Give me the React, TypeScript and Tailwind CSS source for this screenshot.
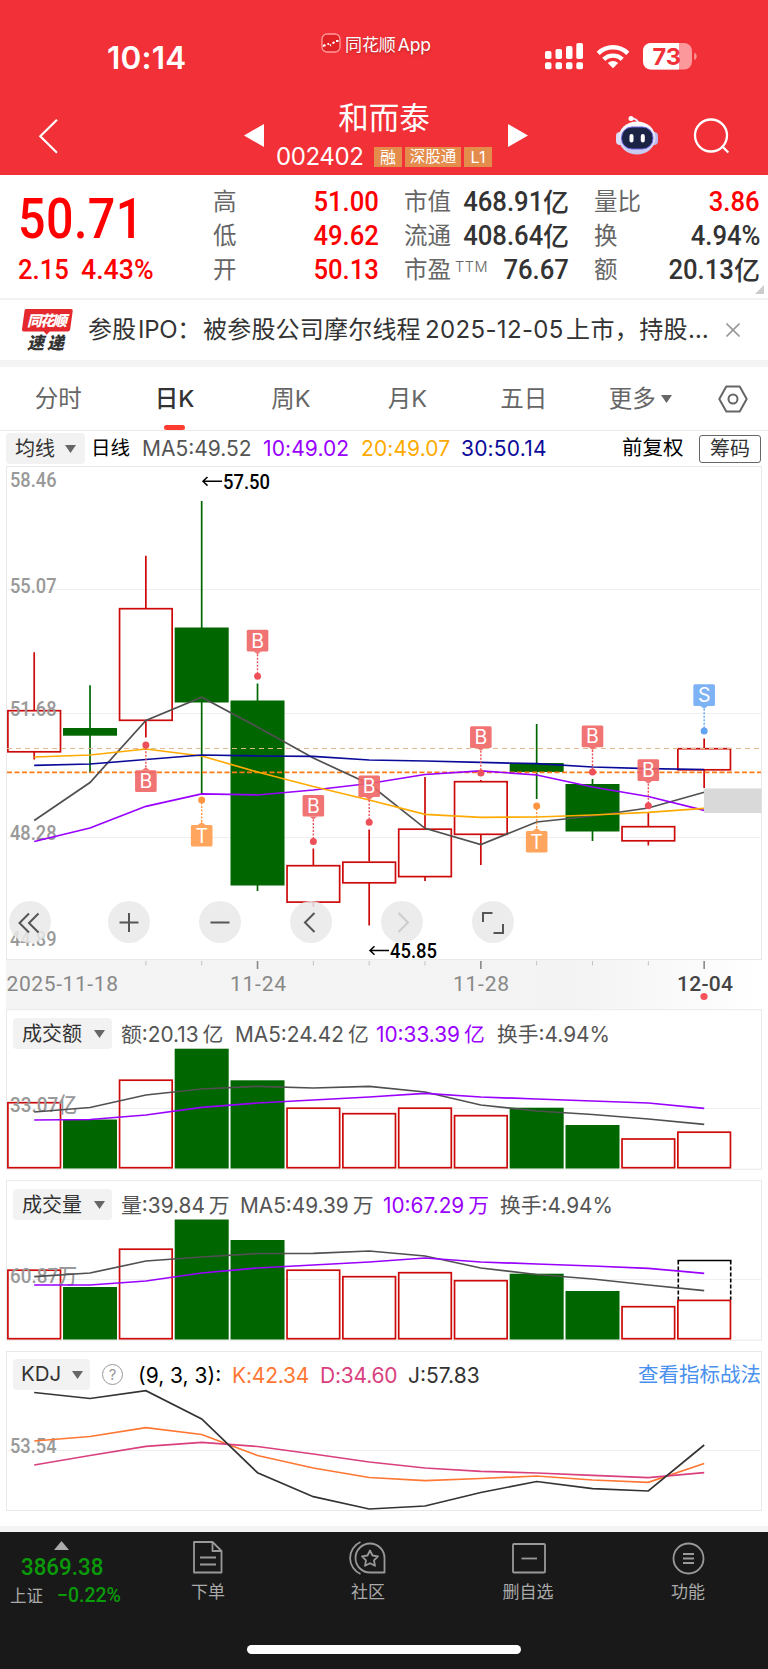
import React from "react";

type Candle = {
    up: boolean;
    high: number;
    top: number;
    bottom: number;
    low: number;
};

type Marker = {
    index: number;
    label: "B" | "T" | "S";
    badge: number;
    dot: number;
};

type QuoteRow = {
    label: string;
    value: string;
    sup?: string;
    unit?: string;
    red?: boolean;
};

type BarPanelProps = {
    offset: number;
    name: string;
    axis: string;
    tops: number[];
    ma5: number[];
    ma10: number[];
    projected?: number;
    legend: React.ReactNode;
};

const STEP = 55.83;
const xAt = (i: number) => 34.2 + STEP * i;

const toPoints = (values: number[]) =>
    values.map((y, i) => `${xAt(i).toFixed(1)},${y}`).join(" ");

const RED = "#cc0a0a";
const GREEN = "#006600";
const DIN = "Roboto, 'Noto Sans CJK SC', sans-serif";

const candles: Candle[] = [
    { up: true, high: 652.3, top: 710, bottom: 751.5, low: 759.5 },
    { up: false, high: 685.3, top: 728, bottom: 735.7, low: 773 },
    { up: true, high: 555.7, top: 608, bottom: 720, low: 737.5 },
    { up: false, high: 501, top: 627.5, bottom: 702.5, low: 793.5 },
    { up: false, high: 683.5, top: 700.5, bottom: 885.5, low: 891 },
    { up: true, high: 848.5, top: 865, bottom: 901.8, low: 907 },
    { up: true, high: 829.5, top: 861.5, bottom: 882.5, low: 925.5 },
    { up: true, high: 777, top: 828.5, bottom: 876.3, low: 881 },
    { up: true, high: 780, top: 781, bottom: 834, low: 865 },
    { up: false, high: 724, top: 763, bottom: 772, low: 799 },
    { up: false, high: 779, top: 784, bottom: 831.5, low: 841 },
    { up: true, high: 813, top: 826, bottom: 840.5, low: 845.5 },
    { up: true, high: 738.5, top: 748, bottom: 769.5, low: 788 },
];

const isUp = candles.map((c) => c.up);

const averages = [
    {
        color: "#505050",
        values: [820.5, 782.5, 720.5, 697.2, 727, 758, 784, 828.3, 844.5, 822, 816, 808, 792.2],
    },
    {
        color: "#9900ff",
        values: [841.5, 828, 806.3, 793.8, 795, 790, 783.5, 774.5, 770.8, 775, 787, 796.5, 810.3],
    },
    {
        color: "#ffaa00",
        values: [757, 755, 749, 756, 772, 786.5, 800, 814.3, 817.3, 817, 815, 812.3, 808.3],
    },
    {
        color: "#0a0a99",
        values: [765.3, 764, 759.5, 755, 756, 756.3, 760, 761, 762.3, 763.7, 767, 768.7, 769.5],
    },
];

const markers: Marker[] = [
    { index: 2, label: "B", badge: 770.3, dot: 745 },
    { index: 3, label: "T", badge: 825, dot: 800 },
    { index: 4, label: "B", badge: 629.8, dot: 676.3 },
    { index: 5, label: "B", badge: 795, dot: 841.5 },
    { index: 6, label: "B", badge: 775.5, dot: 822.3 },
    { index: 8, label: "B", badge: 726.3, dot: 773 },
    { index: 9, label: "T", badge: 831, dot: 806 },
    { index: 10, label: "B", badge: 725.6, dot: 772 },
    { index: 11, label: "B", badge: 759.3, dot: 805.7 },
    { index: 12, label: "S", badge: 684.3, dot: 731 },
];

const markerColors = {
    B: { fill: "#f06565", dot: "#ec5058" },
    T: { fill: "#ff9c4d", dot: "#ff9540" },
    S: { fill: "#6fabf3", dot: "#62a4f2" },
};

const quoteColumns: { className: string; rows: QuoteRow[] }[] = [
    {
        className: "ml-[213px] w-[166px]",
        rows: [
            { label: "高", value: "51.00", red: true },
            { label: "低", value: "49.62", red: true },
            { label: "开", value: "50.13", red: true },
        ],
    },
    {
        className: "ml-[25px] w-[165px]",
        rows: [
            { label: "市值", value: "468.91", unit: "亿" },
            { label: "流通", value: "408.64", unit: "亿" },
            { label: "市盈", sup: "TTM", value: "76.67" },
        ],
    },
    {
        className: "ml-[25px] w-[166px]",
        rows: [
            { label: "量比", value: "3.86", red: true },
            { label: "换", value: "4.94%" },
            { label: "额", value: "20.13", unit: "亿" },
        ],
    },
];

const Caret: React.FC<{ className?: string }> = ({ className = "" }) => (
    <svg viewBox="0 0 11 8" className={`h-2 w-[11px] shrink-0 ${className}`}>
        <path d="M0 0h11L5.5 8z" fill="#666" />
    </svg>
);

const StatusBar: React.FC = () => (
    <div className="flex h-[88px]">
        <div className="w-[321px] pt-[38px] pl-[107px] text-[31.5px] leading-10 font-semibold tracking-[0.2px]">
            10:14
        </div>
        <div className="flex h-[53px] w-[224px] items-end gap-1">
            <svg viewBox="0 0 20 20" className="h-5 w-5">
                <rect x="1" y="1" width="18" height="18" rx="5" fill="#e02226" stroke="#ff9a9a" strokeWidth="1.3" />
                <path d="M2 13l2.5-1M6.500 11.500l1.500-1M9 12.500l1-.5M11.500 10.500l2-1.500M15 8h2.500" fill="none" stroke="#fff" strokeWidth="2" />
            </svg>
            <span className="mb-[-4px] text-[17px] leading-6 tracking-[-0.1px] text-shadow-md">
                同花顺<span className="ml-[2px] text-[17.5px]">App</span>
            </span>
        </div>
        <svg viewBox="545 40 153 33" className="mt-10 h-[33px] w-[153px]">
            <g fill="#fff">
                <rect x="545" y="51" width="6.5" height="8" rx="1.8" />
                <rect x="555.5" y="49" width="6.5" height="10" rx="1.8" />
                <rect x="566" y="46" width="6.5" height="13" rx="1.8" />
                <rect x="576.3" y="43" width="6.7" height="16" rx="1.8" />
                <rect x="545" y="62.3" width="6.5" height="7" rx="1.8" />
                <rect x="555.5" y="62.3" width="6.5" height="7" rx="1.8" />
                <rect x="566" y="62.3" width="6.5" height="7" rx="1.8" />
                <rect x="576.3" y="62.3" width="6.7" height="7" rx="1.8" />
                <path d="M613 68.3l-5.2-5.2a7.4 7.4 0 0 1 10.4 0z" />
            </g>
            <g fill="none" stroke="#fff" strokeWidth="4.4">
                <path d="M598.2 53.4a21 21 0 0 1 29.6 0" />
                <path d="M603.8 59.4a13 13 0 0 1 18.4 0" />
            </g>
            <rect x="643" y="43" width="49" height="26.6" rx="8" fill="#fb989b" />
            <path d="M679 43h-28a8 8 0 0 0-8 8v10.6a8 8 0 0 0 8 8h28z" fill="#fff" />
            <path d="M694.3 52.5q2.4 1 2.4 3.8t-2.4 3.8z" fill="#fb989b" />
            <text x="652.5" y="65" fontSize="23.5" fontWeight="700" fill="#f23037" textLength="28.5">
                73
            </text>
        </svg>
    </div>
);

const NavBar: React.FC = () => (
    <div className="flex h-[87px] items-start">
        <svg viewBox="36 116 26 40" className="mt-7 ml-9 h-10 w-[26px]">
            <path d="M57 119.8L40.3 136.3l16.700 16.5" fill="none" stroke="#fff" strokeWidth="2.2" />
        </svg>
        <svg viewBox="0 0 20 23" className="mt-9 ml-[182px] h-[23px] w-5">
            <path d="M20 0v23L0 11.5z" fill="#fff" />
        </svg>
        <div className="ml-3 flex w-[216px] flex-col items-center">
            <h1 className="mt-[10px] h-10 text-[30.5px] leading-10 font-normal">和而泰</h1>
            <div className="mt-[9px] flex h-5 items-center gap-[3px] text-center text-[16px] leading-5">
                <span className="w-[95px] text-left text-[24px] tracking-[-0.4px]">002402</span>
                <span className="w-7 bg-[#e48c4b]">融</span>
                <span className="w-14 bg-[#e48c4b] text-[15.5px]">深股通</span>
                <span className="w-7 bg-[#e48c4b]">L1</span>
            </div>
        </div>
        <svg viewBox="0 0 20 23" className="mt-9 ml-4 h-[23px] w-5">
            <path d="M0 0v23l20-11.5z" fill="#fff" />
        </svg>
        <svg viewBox="614 114 46 44" className="mt-[26px] ml-[86px] h-11 w-[46px]">
            <defs>
                <linearGradient id="shell" x1="0" y1="0" x2="0" y2="1">
                    <stop offset="0" stopColor="#ffffff" />
                    <stop offset="1" stopColor="#c4c6f0" />
                </linearGradient>
            </defs>
            <path d="M631 118.5q6 0 7 4" fill="none" stroke="#e8e4ff" strokeWidth="2" />
            <circle cx="631" cy="118.5" r="2.5" fill="#fff" />
            <rect x="616" y="132" width="8" height="13" rx="4" fill="#dcdcfa" />
            <rect x="650" y="132" width="8" height="13" rx="4" fill="#b9baf0" />
            <ellipse cx="637" cy="138" rx="18.5" ry="16.5" fill="url(#shell)" />
            <rect x="621.5" y="127" width="31.5" height="22" rx="10.5" fill="#1b2444" stroke="#7468e8" />
            <rect x="629.5" y="134" width="4" height="8.5" rx="2" fill="#fff" />
            <rect x="640.8" y="134" width="4" height="8.5" rx="2" fill="#fff" />
        </svg>
        <svg viewBox="690 114 44 44" className="mt-[26px] ml-[30px] h-11 w-11">
            <g fill="none" stroke="#fff" strokeWidth="2.3">
                <circle cx="711" cy="135.5" r="16" />
                <path d="M721.8 146l6.5 6.5" />
            </g>
        </svg>
    </div>
);

const QuotePanel: React.FC = () => (
    <div className="relative flex h-[125px] border-b-2 border-[#f2f2f2]">
        <div className="absolute top-0 left-[18px] font-[Roboto] font-medium whitespace-nowrap text-[#ff0000]">
            <div className="mt-[14px] origin-left scale-x-[0.88] text-[55px] leading-[60px] tracking-[0.5px]">
                50.71
            </div>
            <div className="mt-[3px] flex text-[27.5px] leading-9">
                <span className="w-[63px] origin-left scale-x-[0.93]">2.15</span>
                <span className="origin-left scale-x-[0.97]">4.43%</span>
            </div>
        </div>
        {quoteColumns.map((column) => (
            <div key={column.className} className={`mt-[10px] flex flex-col ${column.className}`}>
                {column.rows.map((row) => (
                    <div key={row.label} className="flex h-[34px] items-center text-[23.5px]">
                        <span className="text-[#666]">{row.label}</span>
                        {row.sup && (
                            <span className="mb-[6px] ml-1 text-[14.5px] font-light tracking-[0.5px] text-[#666]">
                                {row.sup}
                            </span>
                        )}
                        <span
                            className={`ml-auto origin-right scale-x-[0.95] font-[Roboto] text-[27px] font-medium ${
                                row.red ? "text-[#ff0000]" : "text-[#333]"
                            }`}
                        >
                            {row.value}
                        </span>
                        {row.unit && (
                            <span className="text-[26px] font-medium text-[#333]">{row.unit}</span>
                        )}
                    </div>
                ))}
            </div>
        ))}
        <svg viewBox="0 0 9 9" className="absolute right-1 bottom-1 h-[9px] w-[9px]">
            <path d="M9 0v9H0z" fill="#ccc" />
        </svg>
    </div>
);

const NewsBar: React.FC = () => (
    <div className="flex h-[67px] items-center border-b-[7px] border-[#f4f4f4]">
        <svg viewBox="20 306 54 46" className="ml-5 h-[46px] w-[54px]">
            <path
                d="M26 308h45q2 0 1.7 2l-2.5 18q-.4 2.5-2.5 2.5h-18l-3 3.200-3-3.200h-20q-2 0-1.7-2.200l2.5-18.300q.2-2 1.500-2z"
                fill="#e4282e"
            />
            <g fontFamily="'Noto Sans CJK SC', sans-serif" fontWeight="900" fontStyle="italic">
                <text x="27" y="325" fontSize="14.5" fill="#fff" textLength="40">
                    同花顺
                </text>
                <text x="27" y="347.5" fontSize="17" fill="#333" textLength="37">
                    速递
                </text>
            </g>
        </svg>
        <p className="ml-[14px] flex w-[634px] text-[24px] whitespace-nowrap text-[#333]">
            <span className="w-[50px]">参股</span>
            <span className="w-[65px] tracking-[-0.3px]">IPO：</span>
            <span className="w-[222px] tracking-[0.2px]">被参股公司摩尔线程</span>
            <span className="w-[141px] tracking-[0.35px]">2025-12-05</span>
            <span className="tracking-[0.4px]">上市，持股…</span>
        </p>
        <svg viewBox="0 0 14 14" className="ml-1 h-[14px] w-[14px]">
            <path d="M.5.5l13 13M13.5.5l-13 13" stroke="#999" strokeWidth="1.6" />
        </svg>
    </div>
);

const Tabs: React.FC = () => (
    <div className="flex h-16 border-b border-[#ebebeb] text-[23.5px] text-[#666]">
        {["分时", "日K", "周K", "月K", "五日"].map((tab) => (
            <div
                key={tab}
                className={`relative flex w-[116.4px] items-center justify-center pt-px ${
                    tab === "日K" ? "font-medium text-[#333]" : ""
                }`}
            >
                {tab}
                {tab === "日K" && (
                    <span className="absolute bottom-0 h-[5px] w-[21px] rounded-full bg-[#ff3b30]" />
                )}
            </div>
        ))}
        <div className="flex w-[116.4px] items-center justify-center pt-px">
            更多
            <Caret className="ml-[5px]" />
        </div>
        <div className="flex flex-1 items-center justify-center">
            <svg viewBox="0 0 30 28" className="h-7 w-[30px]">
                <g fill="none" stroke="#666" strokeWidth="2">
                    <path d="M8.3 1.500h13.400L28.700 14l-7 12.500H8.300L1.300 14z" strokeLinejoin="round" />
                    <circle cx="15" cy="14" r="4.5" />
                </g>
            </svg>
        </div>
    </div>
);

const AverageBar: React.FC = () => (
    <div className="flex h-[35px] items-center text-[21px] whitespace-nowrap">
        <button className="ml-[6px] flex h-[31px] w-[79px] items-center rounded bg-[#f2f2f2] pl-[9px] text-[20px] text-[#333]">
            均线
            <Caret className="ml-[10px]" />
        </button>
        <span className="ml-[6px] w-[51px] text-[19.5px] text-black">日线</span>
        <span className="w-[121px] text-[#555]">MA5:49.52</span>
        <span className="w-[98px] tracking-[0.1px] text-[#9900ff]">10:49.02</span>
        <span className="w-[100px] tracking-[0.1px] text-[#ffaa00]">20:49.07</span>
        <span className="w-[161px] tracking-[0.2px] text-[#0a0a99]">30:50.14</span>
        <span className="w-[77px] text-[20.5px] text-black">前复权</span>
        <span className="flex h-7 w-[62px] items-center justify-center rounded-[3px] border border-[#666] text-[20px] text-[#333]">
            筹码
        </span>
    </div>
);

const AxisLabel: React.FC<{ y: number; length: number; children: string }> = ({ y, length, children }) => (
    <text
        x="10"
        y={y}
        fontFamily={DIN}
        fontSize="21"
        fontWeight="500"
        fill="#999"
        textLength={length}
        lengthAdjust="spacingAndGlyphs"
    >
        {children}
    </text>
);

const MarkerFlag: React.FC<{ marker: Marker }> = ({ marker }) => {
    const x = xAt(marker.index);
    const colors = markerColors[marker.label];
    const below = marker.badge > marker.dot;
    const edge = below ? marker.badge : marker.badge + 21.5;
    const tip = below ? edge - 3 : edge + 3;
    return (
        <g>
            <line
                x1={x}
                x2={x}
                y1={tip}
                y2={marker.dot}
                stroke={colors.dot}
                strokeWidth="1.4"
                strokeDasharray="2 1.5"
            />
            <circle cx={x} cy={marker.dot} r="3.5" fill={colors.dot} />
            <g opacity="0.9">
                <rect x={x - 10.8} y={marker.badge} width="21.6" height="21.6" rx="1.5" fill={colors.fill} />
                <path d={`M${x - 4} ${edge}L${x} ${tip}L${x + 4} ${edge}z`} fill={colors.fill} />
            </g>
            <text x={x} y={marker.badge + 17.7} fontSize="19.5" fill="#fff" textAnchor="middle">
                {marker.label}
            </text>
        </g>
    );
};

const zoomButtons = [
    { className: "mr-[57px]", d: "M20 12.5l-9.5 9.5 9.5 9.5M29.5 12.5L20 22l9.5 9.5", color: "#555" },
    { className: "mr-[49px]", d: "M11.5 21.5h19M21 12v19", color: "#555" },
    { className: "mr-[49px]", d: "M11.5 21.5h19", color: "#555" },
    { className: "mr-[49px]", d: "M24.5 12l-9.5 9.5 9.5 9.5", color: "#555" },
    { className: "mr-[49px]", d: "M17.5 12l9.5 9.5-9.5 9.5", color: "#ccc" },
    { className: "", d: "M20.5 12h-9.5v9M31 23v9h-9.5", color: "#555" },
];

const CandleChart: React.FC = () => (
    <div className="relative h-[543px]">
        <svg viewBox="0 466 768 543" className="absolute inset-0 h-full w-full">
            <defs>
                <linearGradient id="axisShade" x1="0" x2="1" y1="0" y2="0">
                    <stop offset="0" stopColor="#f4f4f4" />
                    <stop offset="0.75" stopColor="#f3f3f3" />
                    <stop offset="1" stopColor="#ffffff" />
                </linearGradient>
            </defs>
            <rect x="6" y="960" width="756" height="49" fill="url(#axisShade)" />
            <rect x="6.5" y="466.5" width="755" height="493" fill="#fff" stroke="#e9e9e9" />
            {[589.5, 713.5, 837.5].map((y) => (
                <line key={y} x1="7" x2="761" y1={y} y2={y} stroke="#efefef" />
            ))}
            {candles.map((c, i) => {
                const x = xAt(i);
                return c.up ? (
                    <g key={i} stroke={RED} strokeWidth="1.7" fill="none">
                        <path d={`M${x} ${c.high}V${c.top}M${x} ${c.bottom}V${c.low}`} />
                        <rect x={x - 26.3} y={c.top + 0.7} width="52.6" height={c.bottom - c.top - 0.4} />
                    </g>
                ) : (
                    <g key={i} fill={GREEN} stroke={GREEN}>
                        <path d={`M${x} ${c.high}V${c.low}`} strokeWidth="1.7" />
                        <rect x={x - 27} y={c.top} width="54" height={c.bottom - c.top} stroke="none" />
                    </g>
                );
            })}
            <AxisLabel y={487} length={46.5}>58.46</AxisLabel>
            <AxisLabel y={593} length={46.5}>55.07</AxisLabel>
            <AxisLabel y={716} length={46.5}>51.68</AxisLabel>
            <AxisLabel y={840} length={46.5}>48.28</AxisLabel>
            <AxisLabel y={946} length={46.5}>44.89</AxisLabel>
            <line x1="7" x2="761" y1="748.5" y2="748.5" stroke="#e2b98e" strokeDasharray="5 4" />
            <line x1="7" x2="761" y1="772.3" y2="772.3" stroke="#ff7a14" strokeWidth="1.8" strokeDasharray="5 2.5" />
            {averages.map((line) => (
                <polyline
                    key={line.color}
                    points={toPoints(line.values)}
                    fill="none"
                    stroke={line.color}
                    strokeWidth="1.7"
                />
            ))}
            {markers.map((marker) => (
                <MarkerFlag key={marker.index} marker={marker} />
            ))}
            <rect x="704" y="788.5" width="57.5" height="24.5" fill="#d9d9d9" />
            <g fill="none" stroke="#000" strokeWidth="1.5">
                <path d="M222 481.3h-19M207.5 477l-4.5 4.3 4.5 4.3" />
                <path d="M389 950.5h-19M374.5 946.2l-4.5 4.3 4.5 4.3" />
            </g>
            <g fontFamily={DIN} fontSize="21" fontWeight="500">
                <text x="223" y="488.5" textLength="47" lengthAdjust="spacingAndGlyphs">57.50</text>
                <text x="390" y="958" textLength="47" lengthAdjust="spacingAndGlyphs">45.85</text>
            </g>
            <g fontFamily={DIN} fontSize="21" fontWeight="450" fill="#888">
                <text x="6.5" y="990.5" textLength="111.5" lengthAdjust="spacing">2025-11-18</text>
                <text x="230" y="990.5" textLength="56" lengthAdjust="spacing">11-24</text>
                <text x="453" y="990.5" textLength="56" lengthAdjust="spacing">11-28</text>
                <text x="677" y="990.5" textLength="56" lengthAdjust="spacing" fontWeight="500" fill="#444">12-04</text>
            </g>
            {[2, 3, 5, 6, 7, 9, 10, 11].map((i) => (
                <line key={i} x1={xAt(i)} x2={xAt(i)} y1="961" y2="965.5" stroke="#c4c4c4" />
            ))}
            {[4, 8, 12].map((i) => (
                <line key={i} x1={xAt(i)} x2={xAt(i)} y1="961" y2="969" stroke="#888" strokeWidth="1.6" />
            ))}
            <circle cx="704" cy="996.5" r="3.6" fill="#f5555a" />
        </svg>
        <div className="absolute top-[435px] left-[9px] flex">
            {zoomButtons.map((button) => (
                <span
                    key={button.d}
                    className={`h-[42px] w-[42px] rounded-full bg-[#e9e9e9]/85 ${button.className}`}
                >
                    <svg viewBox="0 0 42 42" className="h-full w-full">
                        <path d={button.d} fill="none" stroke={button.color} strokeWidth="2" />
                    </svg>
                </span>
            ))}
        </div>
    </div>
);

const BarPanel: React.FC<BarPanelProps> = ({ offset, name, axis, tops, ma5, ma10, projected, legend }) => {
    const base = offset + 159.5;
    return (
        <div className="relative h-[171px]">
            <svg viewBox={`0 ${offset} 768 171`} className="absolute inset-0 h-full w-full">
                <rect x="6.5" y={offset + 0.7} width="755" height="159.5" fill="#fff" stroke="#e9e9e9" />
                <line x1="7" x2="761" y1={offset + 99.5} y2={offset + 99.5} stroke="#efefef" />
                {tops.map((top, i) =>
                    isUp[i] ? (
                        <rect
                            key={i}
                            x={xAt(i) - 26.3}
                            y={top + 0.7}
                            width="52.6"
                            height={base - top - 1.5}
                            fill="none"
                            stroke={RED}
                            strokeWidth="1.7"
                        />
                    ) : (
                        <rect key={i} x={xAt(i) - 27} y={top} width="54" height={base - top} fill={GREEN} />
                    )
                )}
                {projected && (
                    <g stroke="#000" strokeWidth="1.6" fill="none">
                        <path d={`M677.5 ${projected}H731.5`} />
                        <path
                            d={`M678.3 ${projected}V${tops[12]}M730.7 ${projected}V${tops[12]}`}
                            strokeDasharray="4 2"
                        />
                    </g>
                )}
                <AxisLabel y={offset + 102.5} length={67}>{axis}</AxisLabel>
                <polyline points={toPoints(ma5)} fill="none" stroke="#505050" strokeWidth="1.7" />
                <polyline points={toPoints(ma10)} fill="none" stroke="#9900ff" strokeWidth="1.7" />
            </svg>
            <div className="relative flex items-center pt-2 pl-[13px] whitespace-nowrap text-[#555]">
                <button className="mr-[9px] flex h-[31px] w-[99px] items-center rounded bg-[#f2f2f2] pl-[9px] text-[20px] text-[#333]">
                    {name}
                    <Caret className="ml-3" />
                </button>
                {legend}
            </div>
        </div>
    );
};

const Legend: React.FC<{ className: string; text: string; unit?: string }> = ({ className, text, unit }) => (
    <span className={`pt-[2px] text-[20.8px] ${className}`}>
        {text}
        {unit && <span className="ml-1">{unit}</span>}
    </span>
);

const KdjPanel: React.FC = () => (
    <div className="relative h-[175px]">
        <svg viewBox="0 1351 768 175" className="absolute inset-0 h-full w-full">
            <rect x="6.5" y="1351.5" width="755" height="159" fill="#fff" stroke="#e9e9e9" />
            <line x1="7" x2="761" y1="1450.5" y2="1450.5" stroke="#efefef" />
            <AxisLabel y={1453} length={46.5}>53.54</AxisLabel>
            <g fill="none" strokeWidth="1.7">
                <polyline
                    stroke="#ff7733"
                    points={toPoints([1441, 1436.5, 1427.7, 1434.5, 1455.5, 1468, 1477.5, 1480.7, 1478.5, 1476, 1480, 1482.3, 1463.5])}
                />
                <polyline
                    stroke="#d9407e"
                    points={toPoints([1465, 1455.5, 1446.3, 1442.3, 1446.5, 1454, 1462, 1468, 1471.3, 1473, 1475.3, 1477.7, 1472.7])}
                />
                <polyline
                    stroke="#333"
                    points={toPoints([1392.5, 1398.5, 1390.7, 1419, 1472.7, 1496.7, 1509, 1506, 1492.5, 1481.5, 1488.7, 1491, 1445])}
                />
            </g>
        </svg>
        <div className="relative flex items-center pt-[7px] pl-[13px] text-[21px] whitespace-nowrap">
            <button className="flex h-[31px] w-[77px] items-center rounded bg-[#f2f2f2] pl-2 text-[20.5px] text-[#333]">
                KDJ
                <Caret className="ml-[11px]" />
            </button>
            <span className="ml-3 flex h-[21px] w-[21px] items-center justify-center rounded-full border-[1.5px] border-[#999] text-[15px] leading-none text-[#999]">
                ?
            </span>
            <span className="ml-[15px] w-[94px] pt-[2px] text-black">(9, 3, 3):</span>
            <span className="w-[88px] pt-[2px] tracking-[-0.2px] text-[#ff7733]">K:42.34</span>
            <span className="w-[88px] pt-[2px] tracking-[-0.2px] text-[#d9407e]">D:34.60</span>
            <span className="pt-[2px] text-[#333]">J:57.83</span>
            <span className="mr-[7px] ml-auto pt-[2px] text-[20.5px] text-[#4a90ee]">查看指标战法</span>
        </div>
    </div>
);

const footerItems = [
    {
        label: "下单",
        icon: (
            <>
                <path d="M5 2h18.5l9 9v21.5H5z" />
                <path d="M23.5 2v9h9M11 17.500h16M11 24.500h16" />
            </>
        ),
    },
    {
        label: "社区",
        icon: (
            <>
                <path d="M21 3.5a14.5 14.5 0 1 0 0 29h14.5V18A14.5 14.5 0 0 0 21 3.5z" />
                <path d="M11.5 2a17.5 17.5 0 0 0 0 32M21 10.5l2.5 5 5.500.8-4 4 1 5.500-5-2.600-5 2.600 1-5.500-4-4 5.500-.8z" />
            </>
        ),
    },
    {
        label: "删自选",
        icon: (
            <>
                <rect x="4" y="4" width="32" height="28.5" rx="1" />
                <path d="M12.5 18.5h15.5" />
            </>
        ),
    },
    {
        label: "功能",
        icon: (
            <>
                <circle cx="19.5" cy="18.5" r="15" />
                <path d="M14 14h11M14 18.500h11M14 23h11" />
            </>
        ),
    },
];

const Footer: React.FC = () => (
    <div className="border-t-[6px] border-[#f4f4f4]">
        <div className="flex h-[137px] flex-col bg-[#191919] text-[#aaa]">
            <div className="flex h-[113px]">
                <div className="w-[128px] shrink-0 font-[Roboto] font-medium text-[#0a9a0a]">
                    <svg viewBox="0 0 15 9" className="mt-[9px] ml-[54px] h-[9px] w-[15px]">
                        <path d="M7.5 0L15 9H0z" fill="#aaa" />
                    </svg>
                    <div className="mt-px ml-[21px] w-[90px] origin-left scale-x-[0.93] text-[24px] leading-8">
                        3869.38
                    </div>
                    <div className="flex h-6 items-center">
                        <span className="ml-[10px] w-[47px] font-['Noto_Sans_CJK_SC'] text-[16.5px] font-normal text-[#aaa]">
                            上证
                        </span>
                        <span className="origin-left scale-x-[0.95] text-[20.5px]">−0.22%</span>
                    </div>
                </div>
                {footerItems.map((item) => (
                    <div key={item.label} className="flex w-40 flex-col items-center pt-2">
                        <svg
                            viewBox="0 0 39 37"
                            className="h-[37px] w-[39px]"
                            fill="none"
                            stroke="#999"
                            strokeWidth="1.8"
                            strokeLinejoin="round"
                        >
                            {item.icon}
                        </svg>
                        <span className="mt-[3px] text-[17px] leading-6">{item.label}</span>
                    </div>
                ))}
            </div>
            <div className="mx-auto h-[9px] w-[274px] rounded-full bg-white" />
        </div>
    </div>
);

const App: React.FC = () => {
    return (
        <div className="w-[768px] overflow-hidden bg-white font-[Inter,'Noto_Sans_CJK_SC',sans-serif]">
            <header className="bg-[#f23037] text-white">
                <StatusBar />
                <NavBar />
            </header>
            <QuotePanel />
            <NewsBar />
            <Tabs />
            <AverageBar />
            <CandleChart />
            <BarPanel
                offset={1009}
                name="成交额"
                axis="33.07亿"
                tops={[1102, 1119.5, 1079.5, 1048.7, 1080.3, 1107.5, 1113, 1107.5, 1115, 1107.7, 1125, 1138.3, 1131.5]}
                ma5={[1112, 1107.5, 1095, 1089, 1086.3, 1088, 1086.3, 1092, 1105, 1111, 1114.5, 1119, 1124.3]}
                ma10={[1120, 1119.5, 1115, 1107.3, 1103, 1100, 1097, 1093.3, 1097, 1099, 1101, 1103, 1108.3]}
                legend={
                    <>
                        <Legend className="w-[114px]" text="额:20.13" unit="亿" />
                        <Legend className="w-[141px]" text="MA5:24.42" unit="亿" />
                        <Legend className="w-[121px] text-[#9900ff]" text="10:33.39" unit="亿" />
                        <Legend className="" text="换手:4.94%" />
                    </>
                }
            />
            <BarPanel
                offset={1180}
                name="成交量"
                axis="60.87万"
                tops={[1269.5, 1287, 1248.5, 1219.5, 1240, 1269.5, 1276, 1272, 1280, 1273.7, 1291, 1306, 1299.7]}
                ma5={[1276.7, 1273, 1261, 1257, 1253.5, 1253.3, 1251, 1256, 1268, 1274.5, 1279, 1285, 1290.7]}
                ma10={[1285, 1285, 1281, 1273, 1268, 1265, 1262, 1258, 1262, 1264, 1266, 1268.3, 1273.3]}
                projected={1260.5}
                legend={
                    <>
                        <Legend className="w-[119px]" text="量:39.84" unit="万" />
                        <Legend className="w-[143px]" text="MA5:49.39" unit="万" />
                        <Legend className="w-[117px] text-[#9900ff]" text="10:67.29" unit="万" />
                        <Legend className="" text="换手:4.94%" />
                    </>
                }
            />
            <KdjPanel />
            <Footer />
        </div>
    );
};

export default App;
